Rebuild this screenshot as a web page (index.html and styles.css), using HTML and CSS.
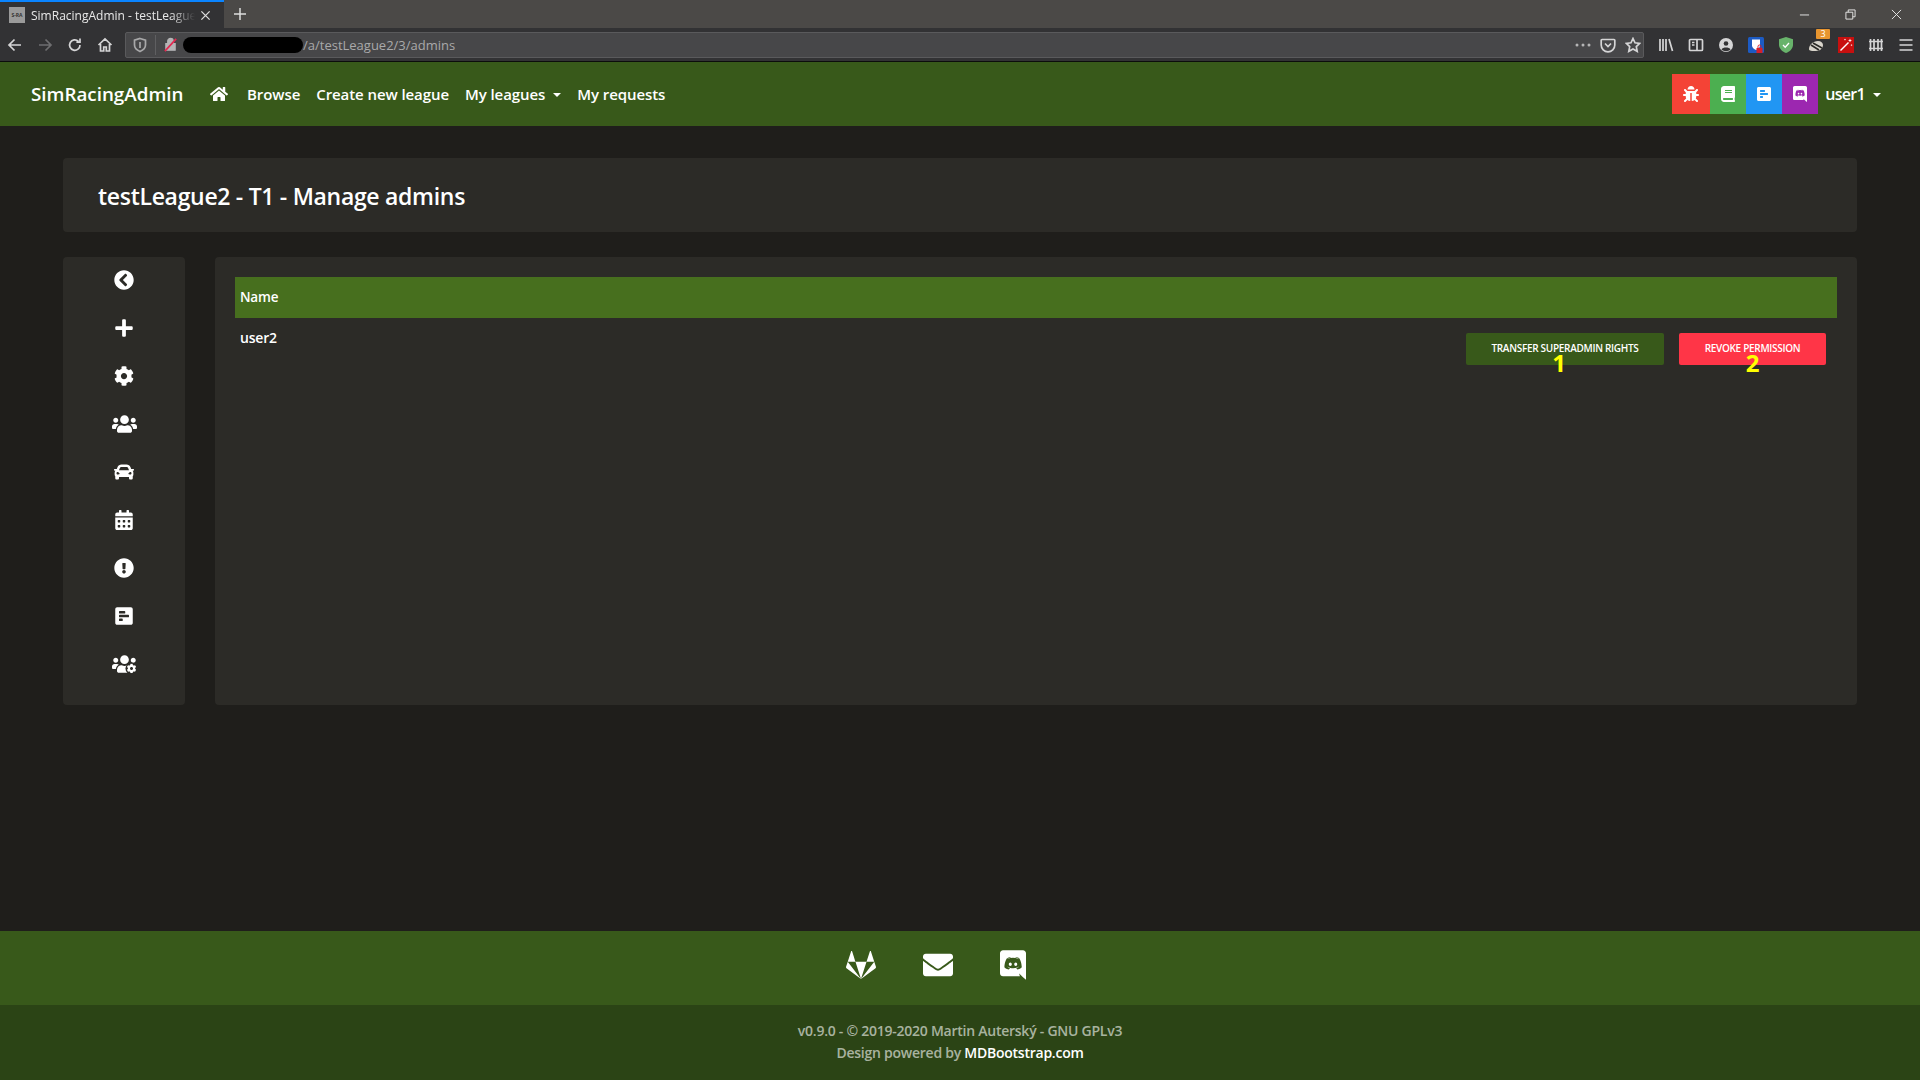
FILE: index.html
```html
<!DOCTYPE html>
<html lang="en">
<head>
    <meta charset="UTF-8">
    <meta name="viewport" content="width=device-width, initial-scale=1.0">
    <title>SimRacingAdmin - testLeague2</title>
    <link rel="stylesheet" href="styles.css">
</head>
<body>
    <svg class="defs" aria-hidden="true">
        <symbol id="i-home" viewBox="0 0 576 512"><path d="M280.37 148.26L96 300.11V464a16 16 0 0 0 16 16l112.06-.29a16 16 0 0 0 15.92-16V368a16 16 0 0 1 16-16h64a16 16 0 0 1 16 16v95.64a16 16 0 0 0 16 16.05L464 480a16 16 0 0 0 16-16V300L295.67 148.26a12.19 12.19 0 0 0-15.3 0zM571.6 251.47L488 182.56V44.05a12 12 0 0 0-12-12h-56a12 12 0 0 0-12 12v72.61L318.47 43a48 48 0 0 0-61 0L4.34 251.47a12 12 0 0 0-1.6 16.9l25.5 31A12 12 0 0 0 45.15 301l235.22-193.74a12.19 12.19 0 0 1 15.3 0L530.9 301a12 12 0 0 0 16.9-1.6l25.5-31a12 12 0 0 0-1.7-16.93z"/></symbol>
        <symbol id="i-cog" viewBox="0 0 512 512"><path d="M487.4 315.7l-42.6-24.6c4.3-23.2 4.3-47 0-70.2l42.6-24.6c4.9-2.8 7.1-8.6 5.5-14-11.1-35.6-30-67.8-54.7-94.6-3.8-4.1-10-5.1-14.8-2.3L380.8 110c-17.9-15.4-38.5-27.3-60.8-35.1V25.8c0-5.6-3.9-10.5-9.4-11.7-36.7-8.2-74.3-7.8-109.2 0-5.5 1.2-9.4 6.1-9.4 11.7V75c-22.2 7.9-42.8 19.8-60.8 35.1L88.7 85.5c-4.9-2.8-11-1.9-14.8 2.3-24.7 26.7-43.6 58.9-54.7 94.6-1.7 5.4.6 11.2 5.5 14L67.3 221c-4.3 23.2-4.3 47 0 70.2l-42.6 24.6c-4.9 2.8-7.1 8.6-5.5 14 11.1 35.6 30 67.8 54.7 94.6 3.8 4.1 10 5.1 14.8 2.3l42.6-24.6c17.9 15.4 38.5 27.3 60.8 35.1v49.2c0 5.6 3.9 10.5 9.4 11.7 36.7 8.2 74.3 7.8 109.2 0 5.5-1.2 9.4-6.1 9.4-11.7v-49.2c22.2-7.9 42.8-19.8 60.8-35.1l42.6 24.6c4.9 2.8 11 1.9 14.8-2.3 24.7-26.7 43.6-58.9 54.7-94.6 1.5-5.5-.7-11.3-5.6-14.1zM256 336c-44.1 0-80-35.9-80-80s35.9-80 80-80 80 35.9 80 80-35.9 80-80 80z"/></symbol>
        <symbol id="i-poll" viewBox="0 0 448 512"><path d="M448 432V80c0-26.5-21.5-48-48-48H48C21.5 32 0 53.5 0 80v352c0 26.5 21.5 48 48 48h352c26.5 0 48-21.5 48-48zM112 192c-8.84 0-16-7.16-16-16v-32c0-8.84 7.16-16 16-16h128c8.84 0 16 7.16 16 16v32c0 8.84-7.16 16-16 16H112zm0 96c-8.84 0-16-7.16-16-16v-32c0-8.84 7.16-16 16-16h224c8.84 0 16 7.16 16 16v32c0 8.84-7.16 16-16 16H112zm0 96c-8.84 0-16-7.16-16-16v-32c0-8.84 7.16-16 16-16h64c8.84 0 16 7.16 16 16v32c0 8.84-7.16 16-16 16h-64z"/></symbol>
        <symbol id="i-discord" viewBox="0 0 448 512"><path d="M297.216 243.2c0 15.616-11.52 28.416-26.112 28.416-14.336 0-26.112-12.8-26.112-28.416s11.52-28.416 26.112-28.416c14.592 0 26.112 12.8 26.112 28.416zm-119.552-28.416c-14.592 0-26.112 12.8-26.112 28.416s11.776 28.416 26.112 28.416c14.592 0 26.112-12.8 26.112-28.416.256-15.616-11.52-28.416-26.112-28.416zM448 52.736V512c-64.494-56.994-43.868-38.128-118.784-107.776l13.568 47.36H52.48C23.552 451.584 0 428.032 0 398.848V52.736C0 23.552 23.552 0 52.48 0h343.04C424.448 0 448 23.552 448 52.736zm-72.96 242.688c0-82.432-36.864-149.248-36.864-149.248-36.864-27.648-71.936-26.88-71.936-26.88l-3.584 4.096c43.52 13.312 63.744 32.512 63.744 32.512-60.811-33.329-132.244-33.335-191.232-7.424-9.472 4.352-15.104 7.424-15.104 7.424s21.248-20.224 67.328-33.536l-2.56-3.072s-35.072-.768-71.936 26.88c0 0-36.864 66.816-36.864 149.248 0 0 21.504 37.12 78.08 38.912 0 0 9.472-11.52 17.152-21.248-32.512-9.728-44.8-30.208-44.8-30.208 3.766 2.636 9.976 6.053 10.496 6.4 43.21 24.198 104.588 32.126 159.744 8.96 8.96-3.328 18.944-8.192 29.44-15.104 0 0-12.8 20.992-46.336 30.464 7.68 9.728 16.896 20.736 16.896 20.736 56.576-1.792 78.336-38.912 78.336-38.912z"/></symbol>
    </svg>

    <!-- browser window -->
    <div class="tabbar">
        <div class="tab">
            <span class="favicon">S-RA</span>
            <span class="tab-title">SimRacingAdmin - testLeague2</span>
            <svg class="tab-close" viewBox="0 0 12 12"><path d="M1.5 1.5l9 9M10.5 1.5l-9 9"/></svg>
        </div>
        <svg class="new-tab" viewBox="0 0 14 14"><path d="M7 1v12M1 7h12"/></svg>
        <div class="window-btns">
            <svg viewBox="0 0 12 12"><path d="M1 6.5h10"/></svg>
            <svg viewBox="0 0 12 12"><path d="M1 3.5h7.5V11H1zM3.5 3.5V1H11v7.5H8.5"/></svg>
            <svg viewBox="0 0 12 12"><path d="M1 1l10 10M11 1L1 11"/></svg>
        </div>
    </div>
    <div class="toolbar">
        <div class="nav-btns">
            <svg class="tool" viewBox="0 0 16 16"><path d="M14 8H2.5M7.5 2.5L2 8l5.5 5.500"/></svg>
            <svg class="tool off" viewBox="0 0 16 16"><path d="M2 8h11.500M8.500 2.500L14 8l-5.500 5.500"/></svg>
            <svg class="tool" viewBox="0 0 16 16"><path d="M13 8a5.200 5.200 0 1 1-1.600-3.700M13 1.500v3.600H9.400"/></svg>
            <svg class="tool" viewBox="0 0 16 16"><path d="M1.500 8L8 2l6.500 6M3.500 7v7h3.200v-4h2.600v4h3.200V7"/></svg>
        </div>
        <div class="urlbar">
            <svg class="tool small" viewBox="0 0 16 16"><path d="M8 1.500l5.500 1.600v5C13.500 11.500 10.500 13.500 8 14.500 5.500 13.500 2.500 11.500 2.500 8.100v-5zM8 5v6"/></svg>
            <span class="url-sep"></span>
            <svg class="lock" viewBox="0 0 16 16"><path class="lock-body" d="M3 7h10v7H3zM5 7V4.500a3 3 0 0 1 6 0V7"/><path class="lock-slash" d="M2 15L14 2"/></svg>
            <span class="redacted"></span>
            <span class="url">/a/testLeague2/3/admins</span>
            <span class="url-actions">
                <svg class="dots" viewBox="0 0 16 4"><circle cx="2" cy="2" r="1.500"/><circle cx="8" cy="2" r="1.500"/><circle cx="14" cy="2" r="1.500"/></svg>
                <svg class="tool" viewBox="0 0 16 16"><path d="M2 2.500h12a.8.8 0 0 1 .8.8V8a6.800 6.800 0 0 1-13.600 0V3.300a.8.8 0 0 1 .8-.8zM5 6.500l3 3 3-3"/></svg>
                <svg class="tool" viewBox="0 0 16 16"><path d="M8 1.500l2 4.300 4.700.6-3.400 3.200.9 4.700L8 12l-4.200 2.300.9-4.700L1.300 6.400 6 5.800z"/></svg>
            </span>
        </div>
        <div class="addons">
            <svg class="tool" viewBox="0 0 16 16"><path d="M2 2v12M5 2v12M8 2v12M11 2l3.500 12"/></svg>
            <svg class="tool" viewBox="0 0 16 16"><path d="M2.500 2.500h11a1 1 0 0 1 1 1v9a1 1 0 0 1-1 1h-11a1 1 0 0 1-1-1v-9a1 1 0 0 1 1-1zM9 2.500v11M4 5.500h2.500M4 8h2.500"/></svg>
            <svg class="tool" viewBox="0 0 16 16"><circle class="solid" cx="8" cy="8" r="7"/><circle class="hole" cx="8" cy="6.500" r="2.300"/><path class="hole" d="M3.500 12.500c1.500-2.600 7.500-2.600 9 0-2.500 2.200-6.500 2.200-9 0z"/></svg>
            <svg class="addon" viewBox="0 0 16 16"><rect width="16" height="16" rx="1.500" fill="#1c5bc4"/><path d="M4 2.500h8v6c0 2-2 3.500-4 4.500-2-1-4-2.500-4-4.500z" fill="#fff"/><path d="M10 11v-1.500a1.500 1.500 0 0 1 3 0V11" fill="none" stroke="#d7202b"/><rect x="8.500" y="11" width="6" height="5" fill="#d7202b"/></svg>
            <svg class="addon" viewBox="0 0 16 16"><path d="M8 0l7 2.200v5.500c0 4-3.500 7-7 8.300-3.500-1.300-7-4.300-7-8.300V2.200z" fill="#68b36b"/><path d="M5 8l2.200 2.200L11 6" fill="none" stroke="#fff" stroke-width="1.300"/></svg>
            <span class="addon-badge-wrap">
                <svg class="addon" viewBox="0 0 16 16"><path d="M1 12c0-4 4-8 9-8 3 0 5 2 5 4 0 3-3 6-7 6-4 0-7 0-7-2z" fill="#d9d4cb"/><path d="M3 8l8 5M5 6l9 5" stroke="#2c2b27" stroke-width="1.600"/></svg>
                <span class="addon-badge">3</span>
            </span>
            <svg class="addon" viewBox="0 0 16 16"><rect width="16" height="16" fill="#c8100f"/><path d="M2.500 13.500l8-8" stroke="#fff" stroke-width="1.500"/><path d="M12 1.500l.6 1.400 1.400.6-1.400.6L12 5.500l-.6-1.400L10 3.500l1.400-.6zM13.500 7l.3.8.8.3-.8.3-.3.8-.3-.8-.8-.3.8-.3zM7 1.500l.3.8.8.3-.8.3-.3.8-.3-.8-.8-.3.8-.3z" fill="#fff"/></svg>
            <svg class="tool" viewBox="0 0 16 16"><path d="M1 4.500h14M1 11.500h14M2.500 2v12M6 2v12M10 2v12M13.500 2v12"/></svg>
            <svg class="tool" viewBox="0 0 16 16"><path d="M1.500 3h13M1.500 8h13M1.500 13h13"/></svg>
        </div>
    </div>

    <div class="page">
        <nav class="navbar">
            <a class="brand">SimRacingAdmin</a>
            <svg class="nav-home"><use href="#i-home"/></svg>
            <a class="nav-link">Browse</a>
            <a class="nav-link">Create new league</a>
            <a class="nav-link caret">My leagues</a>
            <a class="nav-link">My requests</a>
            <div class="nav-right">
                <a class="square red">
                    <svg viewBox="0 0 512 512"><path d="M511.988 288.9c-.478 17.43-15.217 31.1-32.653 31.1H424v16c0 21.864-4.882 42.584-13.6 61.145l60.228 60.228c12.496 12.497 12.496 32.758 0 45.255-12.498 12.497-32.759 12.496-45.256 0l-54.736-54.736C345.886 467.965 314.351 480 280 480V236c0-6.627-5.373-12-12-12h-24c-6.627 0-12 5.373-12 12v244c-34.351 0-65.886-12.035-90.636-32.108l-54.736 54.736c-12.498 12.497-32.759 12.496-45.256 0-12.496-12.497-12.496-32.758 0-45.255l60.228-60.228C92.882 378.584 88 357.864 88 336v-16H32.666C15.23 320 .491 306.33.013 288.9-.484 270.816 14.028 256 32 256h56v-58.745l-46.628-46.628c-12.496-12.497-12.496-32.758 0-45.255 12.498-12.497 32.758-12.497 45.256 0L141.255 160h229.489l54.627-54.627c12.498-12.497 32.758-12.497 45.256 0 12.496 12.497 12.496 32.758 0 45.255L424 197.255V256h56c17.972 0 32.484 14.816 31.988 32.9zM257 0c-61.856 0-112 50.144-112 112h224C369 50.144 318.856 0 257 0z"/></svg>
                </a>
                <a class="square green">
                    <svg viewBox="0 0 448 512"><path d="M448 360V24c0-13.3-10.7-24-24-24H96C43 0 0 43 0 96v320c0 53 43 96 96 96h328c13.3 0 24-10.7 24-24v-16c0-7.500-3.500-14.300-8.900-18.700-4.200-15.400-4.200-59.300 0-74.700 5.400-4.300 8.900-11.100 8.900-18.600zM128 134c0-3.300 2.700-6 6-6h212c3.300 0 6 2.700 6 6v20c0 3.300-2.700 6-6 6H134c-3.300 0-6-2.700-6-6v-20zm0 64c0-3.300 2.700-6 6-6h212c3.300 0 6 2.700 6 6v20c0 3.300-2.700 6-6 6H134c-3.300 0-6-2.700-6-6v-20zm253.400 250H96c-17.700 0-32-14.300-32-32 0-17.600 14.400-32 32-32h285.400c-1.900 17.100-1.900 46.900 0 64z"/></svg>
                </a>
                <a class="square blue"><svg><use href="#i-poll"/></svg></a>
                <a class="square purple"><svg><use href="#i-discord"/></svg></a>
                <a class="nav-link caret user">user1</a>
            </div>
        </nav>

        <main class="content">
            <div class="card title-card">
                <h1>testLeague2 - T1 - Manage admins</h1>
            </div>
            <div class="columns">
                <aside class="card sidebar">
                    <svg viewBox="0 0 512 512"><path d="M256 504C119 504 8 393 8 256S119 8 256 8s248 111 248 248-111 248-248 248zM142.100 273l135.500 135.500c9.400 9.400 24.600 9.400 33.900 0l17-17c9.400-9.400 9.400-24.600 0-33.900L226.900 256l101.600-101.600c9.400-9.400 9.400-24.600 0-33.900l-17-17c-9.400-9.400-24.600-9.400-33.900 0L142.100 239c-9.400 9.400-9.400 24.600 0 34z"/></svg>
                    <svg viewBox="0 0 448 512"><path d="M416 208H272V64c0-17.670-14.330-32-32-32h-32c-17.670 0-32 14.330-32 32v144H32c-17.670 0-32 14.330-32 32v32c0 17.670 14.330 32 32 32h144v144c0 17.670 14.330 32 32 32h32c17.670 0 32-14.330 32-32V304h144c17.670 0 32-14.330 32-32v-32c0-17.670-14.330-32-32-32z"/></svg>
                    <svg><use href="#i-cog"/></svg>
                    <svg class="wide" viewBox="0 0 640 512"><path d="M96 224c35.300 0 64-28.700 64-64s-28.700-64-64-64-64 28.700-64 64 28.700 64 64 64zm448 0c35.300 0 64-28.700 64-64s-28.700-64-64-64-64 28.700-64 64 28.700 64 64 64zm32 32h-64c-17.600 0-33.500 7.100-45.100 18.600 40.300 22.100 68.900 62 75.100 109.400h66c17.700 0 32-14.300 32-32v-32c0-35.300-28.700-64-64-64zm-256 0c61.900 0 112-50.100 112-112S381.900 32 320 32 208 82.100 208 144s50.100 112 112 112zm76.800 32h-8.300c-20.800 10-43.900 16-68.500 16s-47.600-6-68.500-16h-8.300C179.600 288 128 339.600 128 403.200V432c0 26.500 21.500 48 48 48h288c26.500 0 48-21.500 48-48v-28.800c0-63.600-51.600-115.200-115.200-115.200zm-223.700-13.400C161.500 263.100 145.600 256 128 256H64c-35.300 0-64 28.700-64 64v32c0 17.700 14.300 32 32 32h65.900c6.300-47.400 34.900-87.300 75.200-109.400z"/></svg>
                    <svg viewBox="0 0 512 512"><path d="M499.990 176h-59.870l-16.640-41.600C406.380 91.630 365.570 64 319.500 64h-127c-46.060 0-86.880 27.630-103.990 70.400L71.870 176H12.010C4.200 176-1.530 183.340.37 190.910l6 24C7.700 220.250 12.500 224 18.010 224h20.070C24.650 235.730 16 252.780 16 272v48c0 16.120 6.160 30.670 16 41.930V416c0 17.670 14.330 32 32 32h32c17.670 0 32-14.330 32-32v-32h256v32c0 17.670 14.330 32 32 32h32c17.670 0 32-14.330 32-32v-54.070c9.840-11.250 16-25.800 16-41.930v-48c0-19.220-8.650-36.270-22.070-48H494c5.510 0 10.310-3.750 11.640-9.090l6-24c1.890-7.570-3.840-14.910-11.650-14.910zm-352.060-17.830c7.290-18.220 24.940-30.170 44.570-30.170h127c19.630 0 37.280 11.950 44.570 30.170L384 208H128l19.930-49.830zM96 319.800c-19.200 0-32-12.760-32-31.900S76.800 256 96 256s48 28.710 48 47.850-28.800 15.950-48 15.950zm320 0c-19.200 0-48 3.190-48-15.950S396.800 256 416 256s32 12.760 32 31.900-12.800 31.900-32 31.900z"/></svg>
                    <svg viewBox="0 0 448 512"><path d="M0 464c0 26.500 21.500 48 48 48h352c26.500 0 48-21.500 48-48V192H0v272zm320-196c0-6.600 5.400-12 12-12h40c6.600 0 12 5.400 12 12v40c0 6.600-5.400 12-12 12h-40c-6.600 0-12-5.400-12-12v-40zm0 128c0-6.600 5.400-12 12-12h40c6.600 0 12 5.400 12 12v40c0 6.600-5.400 12-12 12h-40c-6.600 0-12-5.400-12-12v-40zM192 268c0-6.600 5.400-12 12-12h40c6.600 0 12 5.400 12 12v40c0 6.600-5.400 12-12 12h-40c-6.600 0-12-5.400-12-12v-40zm0 128c0-6.600 5.400-12 12-12h40c6.600 0 12 5.400 12 12v40c0 6.600-5.400 12-12 12h-40c-6.600 0-12-5.400-12-12v-40zM64 268c0-6.600 5.400-12 12-12h40c6.600 0 12 5.400 12 12v40c0 6.600-5.400 12-12 12H76c-6.600 0-12-5.400-12-12v-40zm0 128c0-6.600 5.400-12 12-12h40c6.600 0 12 5.400 12 12v40c0 6.600-5.400 12-12 12H76c-6.600 0-12-5.400-12-12v-40zM400 64h-48V16c0-8.800-7.200-16-16-16h-32c-8.800 0-16 7.200-16 16v48H160V16c0-8.800-7.200-16-16-16h-32c-8.800 0-16 7.200-16 16v48H48C21.500 64 0 85.500 0 112v48h448v-48c0-26.500-21.500-48-48-48z"/></svg>
                    <svg viewBox="0 0 512 512"><path d="M504 256c0 136.997-111.043 248-248 248S8 392.997 8 256C8 119.083 119.043 8 256 8s248 111.083 248 248zm-248 50c-25.405 0-46 20.595-46 46s20.595 46 46 46 46-20.595 46-46-20.595-46-46-46zm-43.673-165.346l7.418 136c.347 6.364 5.609 11.346 11.982 11.346h48.546c6.373 0 11.635-4.982 11.982-11.346l7.418-136c.375-6.874-5.098-12.654-11.982-12.654h-63.383c-6.884 0-12.356 5.780-11.981 12.654z"/></svg>
                    <svg><use href="#i-poll"/></svg>
                    <svg class="wide" viewBox="0 0 640 512">
                        <path d="M96 224c35.300 0 64-28.700 64-64s-28.700-64-64-64-64 28.700-64 64 28.700 64 64 64zM320 256c61.900 0 112-50.100 112-112S381.900 32 320 32 208 82.100 208 144s50.100 112 112 112zM173.100 274.600C161.500 263.100 145.600 256 128 256H64c-35.300 0-64 28.700-64 64v32c0 17.700 14.300 32 32 32h65.900c6.300-47.400 34.900-87.300 75.200-109.400zM396.800 288h-8.300c-20.800 10-43.900 16-68.500 16s-47.600-6-68.500-16h-8.300C179.600 288 128 339.600 128 403.200V432c0 26.500 21.500 48 48 48h224V288zM544 224c35.300 0 64-28.700 64-64s-28.700-64-64-64-64 28.700-64 64 28.700 64 64 64z"/>
                        <circle class="cog-gap" cx="500" cy="370" r="155"/>
                        <use href="#i-cog" x="375" y="245" width="250" height="250"/>
                    </svg>
                </aside>
                <section class="card panel">
                    <div class="table-head">Name</div>
                    <div class="table-row">
                        <span class="row-name">user2</span>
                        <div class="row-actions">
                            <button class="btn btn-green">Transfer superadmin rights<span class="mark">1</span></button>
                            <button class="btn btn-red">Revoke permission<span class="mark">2</span></button>
                        </div>
                    </div>
                </section>
            </div>
        </main>

        <footer>
            <div class="footer-icons">
                <svg viewBox="0 0 512 512"><path d="M105.200 24.900c-3.100-8.900-15.700-8.900-18.900 0L29.800 199.700h132c-.1 0-56.600-174.800-56.600-174.800zM.9 287.700c-2.600 8 .3 16.900 7.100 22l247.900 184-226.200-294zm160.800-88l94.300 294 94.300-294zm349.400 88l-28.800-88-226.300 294 247.900-184c6.900-5.100 9.700-14 7.200-22zM425.700 24.900c-3.100-8.900-15.700-8.900-18.900 0l-56.600 174.800h132z"/></svg>
                <svg viewBox="0 0 512 512"><path d="M502.300 190.800c3.900-3.100 9.700-.2 9.700 4.700V400c0 26.500-21.500 48-48 48H48c-26.500 0-48-21.500-48-48V195.600c0-5 5.700-7.800 9.700-4.700 22.400 17.400 52.100 39.500 154.100 113.600 21.100 15.400 56.700 47.800 92.200 47.600 35.700.3 72-32.800 92.300-47.600 102-74.100 131.600-96.300 154-113.700zM256 320c23.200.4 56.600-29.200 73.400-41.400 132.700-96.300 142.800-104.700 173.400-128.700 5.800-4.500 9.200-11.500 9.200-18.900v-19c0-26.500-21.500-48-48-48H48C21.500 64 0 85.500 0 112v19c0 7.400 3.400 14.300 9.200 18.900 30.600 23.900 40.700 32.400 173.400 128.700 16.800 12.200 50.200 41.800 73.400 41.400z"/></svg>
                <svg><use href="#i-discord"/></svg>
            </div>
            <div class="copyright">
                <div>v0.9.0 - © 2019-2020 Martin Auterský - GNU GPLv3</div>
                <div>Design powered by <a>MDBootstrap.com</a></div>
            </div>
        </footer>
    </div>
</body>
</html>
```

FILE: styles.css
```css
* {
    box-sizing: border-box;
}
body {
    font-family: "Open Sans", "Noto Sans", Arial, sans-serif;
    margin: 0;
    height: 1080px;
    display: flex;
    flex-direction: column;
    overflow: hidden;
    background-color: #1f1e1b;
    color: #fff;
}
.defs {
    position: absolute;
    width: 0;
    height: 0;
}
svg {
    fill: currentColor;
}

/* browser */
.tabbar {
    height: 28px;
    display: flex;
    align-items: center;
    background-color: #4b4947;
}
.tab {
    width: 224px;
    height: 28px;
    display: flex;
    align-items: center;
    padding-left: 9px;
    border-top: 2px solid #0a84ff;
    background-color: #323234;
    font-size: 12px;
    color: #e8e8e8;
}
.favicon {
    width: 16px;
    height: 16px;
    flex: none;
    background-color: #9a9a9a;
    color: #333;
    font-size: 5px;
    font-weight: 700;
    line-height: 16px;
    text-align: center;
}
.tab-title {
    width: 164px;
    margin-left: 6px;
    overflow: hidden;
    white-space: nowrap;
    -webkit-mask-image: linear-gradient(to right, #000 85%, transparent);
    mask-image: linear-gradient(to right, #000 85%, transparent);
}
.tab-close {
    width: 11px;
    height: 11px;
    margin-left: 5px;
    fill: none;
    stroke: #ddd;
    stroke-width: 1.4;
}
.new-tab {
    width: 14px;
    height: 14px;
    margin-left: 9px;
    fill: none;
    stroke: #ddd;
    stroke-width: 1.5;
}
.window-btns {
    margin-left: auto;
    display: flex;
    gap: 35px;
    padding-right: 18px;
}
.window-btns svg {
    width: 11px;
    height: 11px;
    fill: none;
    stroke: #eee;
    stroke-width: 1;
}
.toolbar {
    height: 34px;
    display: flex;
    align-items: center;
    background-color: #323234;
    border-bottom: 1px solid #0c0c0c;
}
.tool {
    width: 16px;
    height: 16px;
    flex: none;
    fill: none;
    stroke: #d5d5d6;
    stroke-width: 1.7;
}
.tool.off {
    stroke: #6e6e70;
}
.tool.small {
    stroke: #a8a8a9;
}
.tool .solid {
    fill: #d5d5d6;
    stroke: none;
}
.tool .hole {
    fill: #323234;
    stroke: none;
}
.nav-btns {
    width: 125px;
    flex: none;
    display: flex;
    gap: 14px;
    padding-left: 7px;
}
.urlbar {
    width: 1519px;
    flex: none;
    height: 26px;
    display: flex;
    align-items: center;
    padding-left: 6px;
    background-color: #474749;
    border: 1px solid #5a5a5c;
    border-radius: 2px;
    font-size: 13px;
}
.url-sep {
    width: 1px;
    height: 20px;
    margin: 0 7px;
    background-color: #5f5f61;
}
.lock {
    width: 15px;
    height: 15px;
    flex: none;
    fill: none;
}
.lock-body {
    fill: #b5b5b6;
    stroke: #b5b5b6;
    stroke-width: 1.2;
}
.lock-slash {
    stroke: #e22850;
    stroke-width: 1.8;
}
.redacted {
    width: 120px;
    height: 16px;
    margin-left: 5px;
    background-color: #000;
    border-radius: 8px;
}
.url {
    padding-top: 1px;
    color: #a9a9aa;
}
.url-actions {
    margin-left: auto;
    display: flex;
    align-items: center;
    gap: 9px;
    padding-right: 2px;
}
.dots {
    width: 16px;
    height: 4px;
    fill: #b5b5b6;
}
.addons {
    display: flex;
    align-items: center;
    gap: 14px;
    margin-left: 14px;
}
.addon {
    display: block;
    width: 16px;
    height: 16px;
    flex: none;
}
.addon-badge-wrap {
    position: relative;
}
.addon-badge {
    position: absolute;
    top: -8px;
    right: -6px;
    width: 14px;
    height: 10px;
    background-color: #e8952f;
    border-radius: 1px;
    font-size: 9px;
    line-height: 10px;
    text-align: center;
}

/* site */
.page {
    flex: 1;
    display: flex;
    flex-direction: column;
}
.navbar {
    height: 64px;
    display: flex;
    align-items: center;
    padding-left: 31px;
    background-color: #38591a;
    font-size: 15px;
    font-weight: 600;
}
.brand {
    width: 179px;
    font-size: 18.8px;
}
.nav-home {
    width: 18px;
    height: 16px;
    margin-right: 19px;
}
.nav-link {
    margin-right: 16px;
    letter-spacing: -0.08px;
}
.caret::after {
    content: "";
    display: inline-block;
    margin-left: 8px;
    vertical-align: 3px;
    border-top: 4px solid #fff;
    border-left: 4px solid transparent;
    border-right: 4px solid transparent;
}
.nav-right {
    margin-left: auto;
    display: flex;
    align-items: center;
}
.square {
    width: 36px;
    height: 40px;
    display: flex;
    align-items: center;
    justify-content: center;
}
.square svg {
    width: 16px;
    height: 16px;
}
.red {
    width: 38px;
    background-color: #f44336;
}
.green {
    background-color: #4caf50;
}
.blue {
    background-color: #2196f3;
}
.purple {
    background-color: #9c27b0;
}
.user {
    margin: 0 39px 0 7px;
    font-size: 16px;
    letter-spacing: -0.7px;
}
.content {
    flex: 1;
    padding: 32px 63px 0;
}
.card {
    background-color: #2c2b27;
    border-radius: 4px;
}
.title-card {
    height: 74px;
    display: flex;
    align-items: center;
    padding: 2px 0 0 35px;
    margin-bottom: 25px;
}
h1 {
    margin: 0;
    font-size: 23px;
    font-weight: 600;
    letter-spacing: -0.3px;
}
.columns {
    display: flex;
    gap: 30px;
    height: 448px;
}
.sidebar {
    width: 122px;
    display: flex;
    flex-direction: column;
    align-items: center;
    gap: 28px;
    padding-top: 13px;
}
.sidebar svg {
    width: 20px;
    height: 20px;
    flex: none;
}
.sidebar .wide {
    width: 25px;
}
.cog-gap {
    fill: #2c2b27;
}
.panel {
    flex: 1;
    padding: 20px;
}
.table-head {
    height: 41px;
    padding-left: 5px;
    background-color: #476f1e;
    font-size: 13.5px;
    font-weight: 600;
    line-height: 40px;
    letter-spacing: -0.2px;
}
.table-row {
    display: flex;
    justify-content: space-between;
    padding: 5px 11px 0 5px;
}
.row-name {
    margin-top: 5px;
    font-size: 14px;
    font-weight: 600;
    letter-spacing: -0.2px;
}
.row-actions {
    display: flex;
    gap: 15px;
    margin-top: 10px;
}
.btn {
    position: relative;
    height: 32px;
    padding: 0 0 2px;
    border: none;
    border-radius: 2px;
    color: #fff;
    font-family: inherit;
    font-size: 10px;
    font-weight: 600;
    text-transform: uppercase;
    letter-spacing: -0.3px;
}
.btn-green {
    width: 198px;
    background-color: #38591a;
}
.btn-red {
    width: 147px;
    background-color: #ff3547;
}
.mark {
    position: absolute;
    top: 15px;
    left: 0;
    right: 12px;
    color: #ffff00;
    font-size: 24px;
    font-weight: 700;
    line-height: 30px;
    letter-spacing: 0;
}
.btn-red .mark {
    right: 0;
}
.footer-icons {
    height: 74px;
    display: flex;
    justify-content: center;
    align-items: center;
    gap: 47px;
    padding: 0 48px 6px 0;
    background-color: #38591a;
}
.footer-icons svg {
    width: 30px;
    height: 30px;
}
.footer-icons svg:last-child {
    width: 26px;
}
.copyright {
    height: 75px;
    padding-top: 15px;
    background-color: #2b4415;
    color: rgba(255, 255, 255, 0.6);
    font-size: 14px;
    font-weight: 600;
    line-height: 22px;
    text-align: center;
    letter-spacing: -0.25px;
}
.copyright a {
    color: #fff;
}
```
